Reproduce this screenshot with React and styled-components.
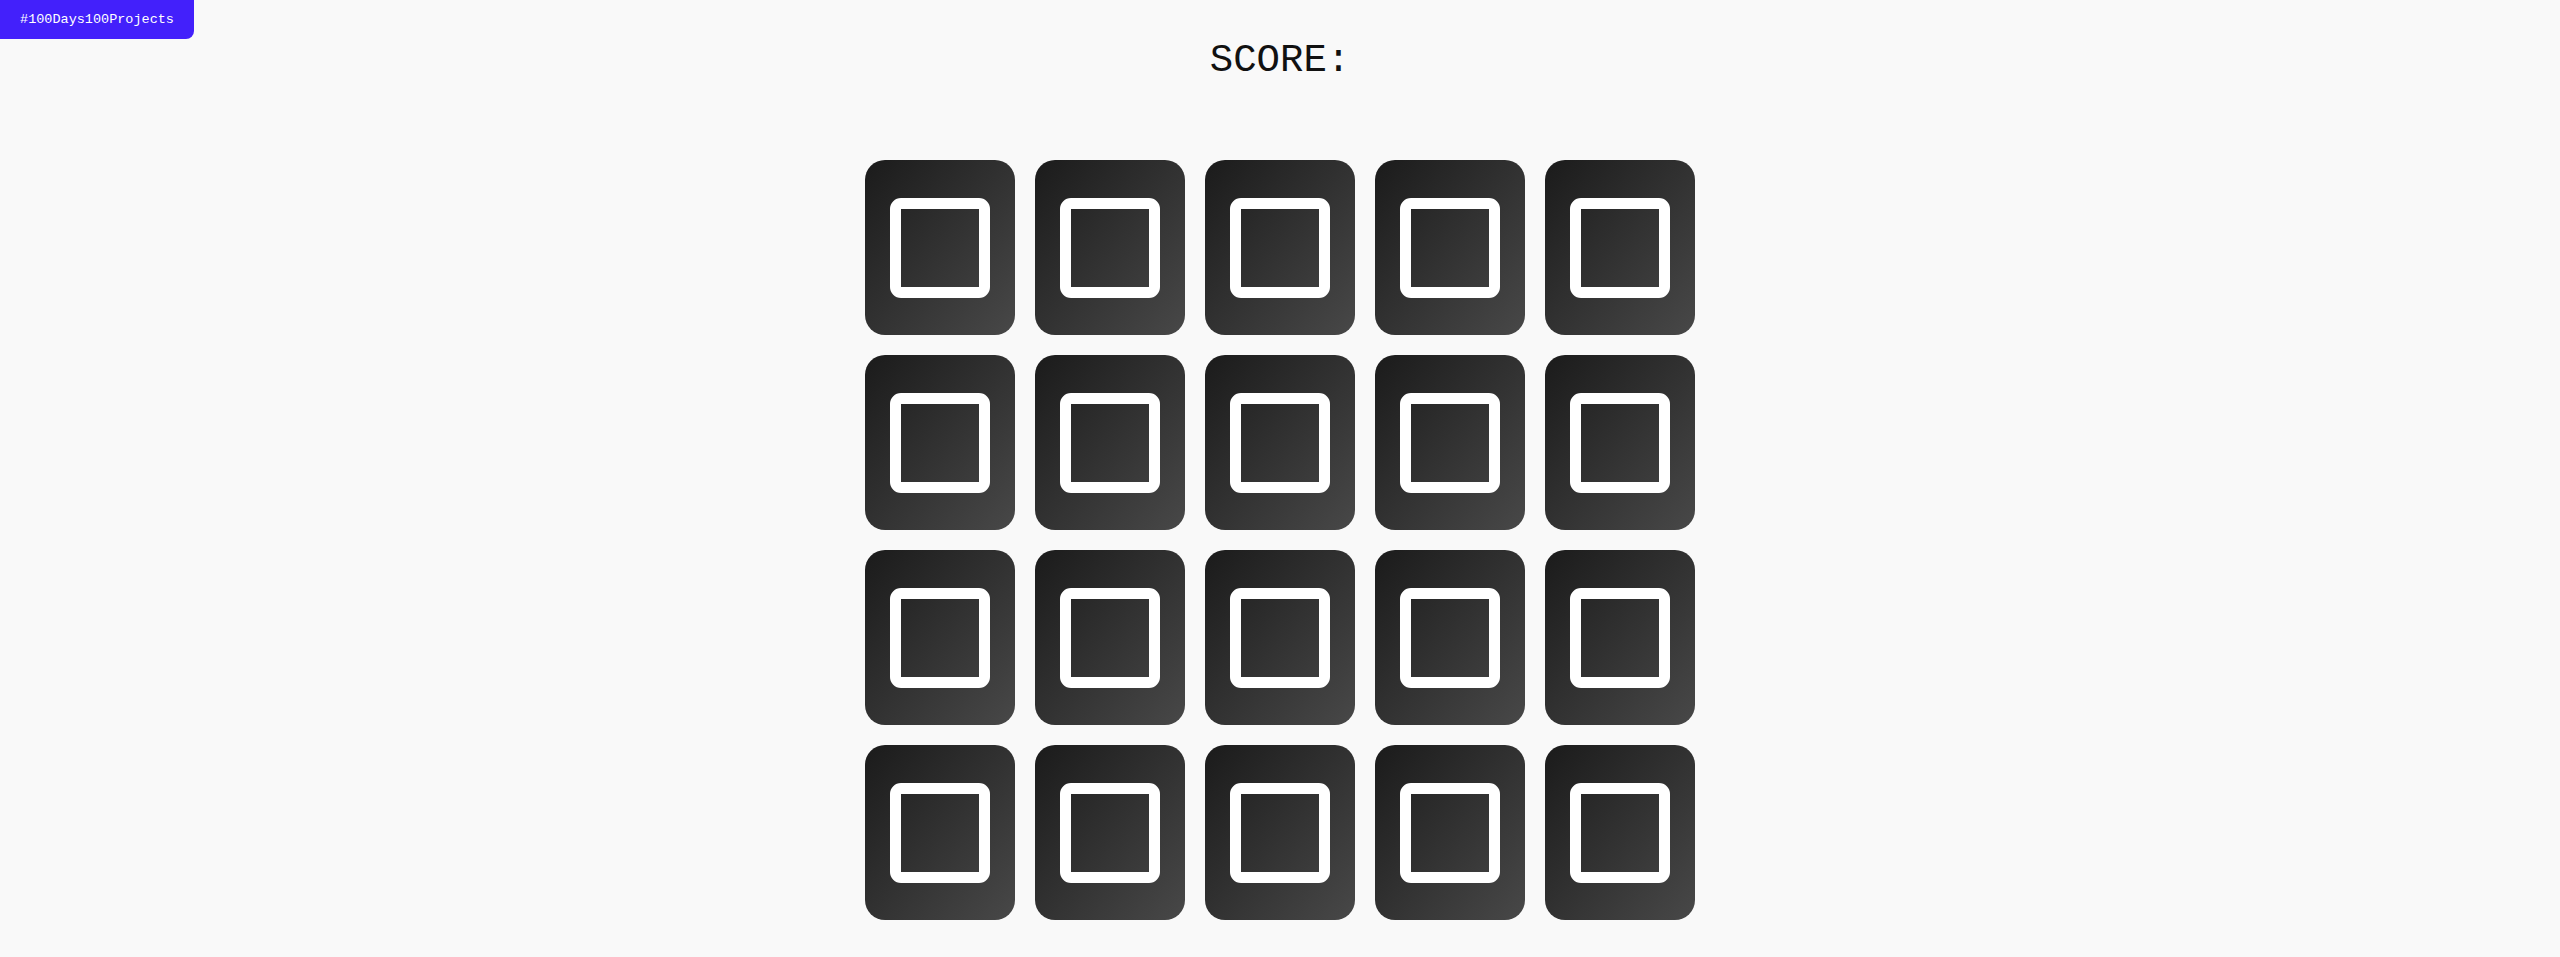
import React from 'react'
import styled, { createGlobalStyle } from 'styled-components'

const GlobalStyle = createGlobalStyle`
  * { box-sizing: border-box; }
  body {
    margin: 0;
    background: #f9f9f9;
    font-family: "Liberation Mono", "DejaVu Sans Mono", monospace;
  }
`;

const Badge = styled.a`
  position: fixed;
  top: 0;
  left: 0;
  height: 39px;
  width: 194px;
  display: flex;
  align-items: center;
  justify-content: center;
  background: #4320fb;
  color: #fff;
  font-size: 13.5px;
  text-decoration: none;
  border-bottom-right-radius: 8px;
`;

const Page = styled.div`
  display: flex;
  flex-direction: column;
  align-items: center;
  padding-top: 39px;
`;

const Score = styled.h1`
  margin: 0;
  font-size: 39px;
  font-weight: 400;
  line-height: 44px;
  color: #111;
`;

const Grid = styled.div`
  margin-top: 77px;
  display: grid;
  grid-template-columns: repeat(5, 150px);
  grid-auto-rows: 175px;
  gap: 20px;
`;

const Card = styled.div`
  border-radius: 20px;
  background: linear-gradient(to bottom right, #1b1b1b, #484848);
  display: flex;
  align-items: center;
  justify-content: center;
`;

const Square = styled.div`
  width: 100px;
  height: 100px;
  border: 11px solid #fff;
  border-radius: 11px;
`;

const App = () => {
  const cards = Array.from({ length: 20 }, (_, i) => i);
  return (
    <>
      <GlobalStyle />
      <Badge href="#">#100Days100Projects</Badge>
      <Page>
        <Score>SCORE:</Score>
        <Grid>
          {cards.map(i => (
            <Card key={i}>
              <Square />
            </Card>
          ))}
        </Grid>
      </Page>
    </>
  )
}

export default App;
